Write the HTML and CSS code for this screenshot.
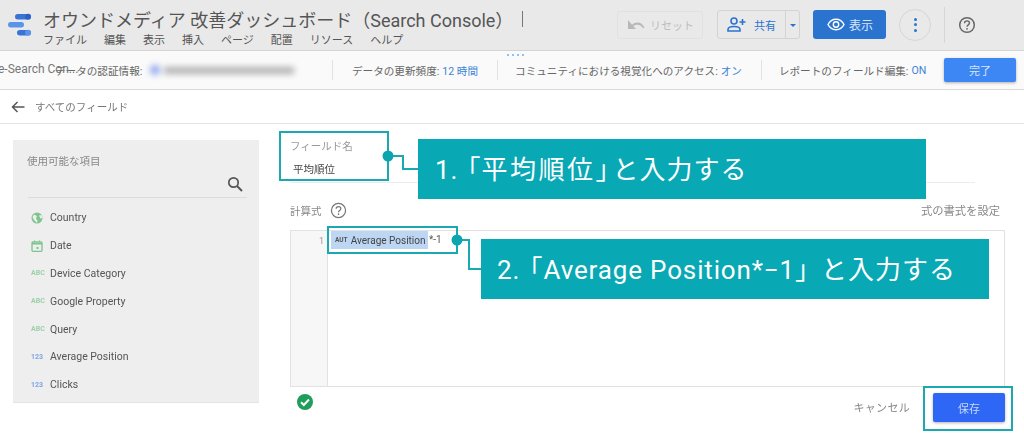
FILE: index.html
```html
<!DOCTYPE html>
<html lang="ja">
<head>
    <meta charset="UTF-8">
    <meta name="viewport" content="width=device-width, initial-scale=1.0">
    <title>オウンドメディア 改善ダッシュボード</title>
    <link rel="stylesheet" href="styles.css">
</head>
<body>
    <div class="page">
        <!-- ヘッダー -->
        <header class="topbar">
            <svg class="logo" width="24" height="24" viewBox="0 0 24 24">
                <rect x="7" y="1" width="16" height="5.500" rx="2.750" fill="#3a72d8"/>
                <rect x="0" y="9" width="16" height="5.500" rx="2.750" fill="#5a93ea"/>
                <rect x="9" y="17" width="14" height="5.500" rx="2.750" fill="#3a72d8"/>
                <circle cx="20" cy="3.700" r="2.900" fill="#2d5fc4"/>
                <circle cx="20" cy="19.700" r="2.900" fill="#5a93ea"/>
            </svg>
            <div class="doc">
                <div class="doc-title">オウンドメディア 改善ダッシュボード（Search Console）</div>
                <nav class="menu">
                    <span>ファイル</span><span>編集</span><span>表示</span><span>挿入</span><span>ページ</span><span>配置</span><span>リソース</span><span>ヘルプ</span>
                </nav>
            </div>
            <div class="caret"></div>
            <div class="actions">
                <button class="btn-reset">
                    <svg width="18" height="12" viewBox="0 0 18 12"><path d="M1 1v9h8L6.300 7.200C7.500 6.300 9 5.800 10.500 5.800c2.300 0 4.300 1.400 5.300 3.500l1.700-.8C16.100 5.400 13.500 3.500 10.500 3.500 8.400 3.500 6.500 4.300 5 5.700L1 1z" fill="#b9b9b9"/></svg>
                    リセット
                </button>
                <div class="btn-share">
                    <span class="share-main">
                        <svg width="19" height="15" viewBox="0 0 19 15"><circle cx="7" cy="4" r="3" fill="none" stroke="#2a74d0" stroke-width="1.600"/><path d="M1 14v-1.500C1 10.500 4 9.500 7 9.500s6 1 6 3V14z" fill="none" stroke="#2a74d0" stroke-width="1.600"/><path d="M15.500 2v6M12.500 5h6" stroke="#2a74d0" stroke-width="1.600"/></svg>
                        共有
                    </span>
                    <span class="share-arrow"></span>
                </div>
                <button class="btn-view">
                    <svg width="18" height="13" viewBox="0 0 18 13"><path d="M1 6.500C2.600 3.300 5.500 1.300 9 1.300s6.400 2 8 5.200c-1.600 3.200-4.500 5.200-8 5.200s-6.400-2-8-5.200z" fill="none" stroke="#fff" stroke-width="1.400"/><circle cx="9" cy="6.500" r="2.700" fill="none" stroke="#fff" stroke-width="1.400"/></svg>
                    表示
                </button>
                <div class="btn-more"><i></i><i></i><i></i></div>
                <div class="bar-sep"></div>
                <svg class="help" width="18" height="18" viewBox="0 0 18 18"><circle cx="9" cy="9" r="7.300" fill="none" stroke="#666" stroke-width="1.500"/><path d="M6.500 7.200C6.500 5.800 7.600 4.900 9 4.900s2.500.9 2.500 2.200c0 1.800-2.500 1.800-2.500 3.700" fill="none" stroke="#666" stroke-width="1.400"/><circle cx="9" cy="12.800" r=".9" fill="#666"/></svg>
            </div>
        </header>

        <!-- データソース情報 -->
        <div class="infobar">
            <span class="cut-name">e-Search Con...</span>
            <span class="info-cred">データの認証情報:</span>
            <span class="blurred"><i></i><b></b></span>
            <span class="info-item first">データの更新頻度: <em>12 時間</em></span>
            <span class="info-item">コミュニティにおける視覚化へのアクセス: <em>オン</em></span>
            <span class="info-item last">レポートのフィールド編集: <em>ON</em></span>
            <button class="btn-done">完了</button>
            <div class="grip"><i></i><i></i><i></i><i></i></div>
        </div>

        <div class="backrow">
            <svg width="14" height="12" viewBox="0 0 14 12"><path d="M13.500 6H2M6.500 1L1.500 6l5 5" fill="none" stroke="#555" stroke-width="1.500"/></svg>
            <span>すべてのフィールド</span>
        </div>

        <main class="content">
            <!-- 使用可能な項目 -->
            <aside class="fields">
                <div class="fields-label">使用可能な項目</div>
                <div class="fields-search">
                    <svg width="16" height="16" viewBox="0 0 16 16"><circle cx="6.500" cy="6.500" r="4.700" fill="none" stroke="#555" stroke-width="1.700"/><path d="M10 10l5 5" stroke="#555" stroke-width="2"/></svg>
                </div>
                <ul class="field-list">
                    <li><svg class="ficon" width="12" height="12" viewBox="0 0 12 12"><circle cx="6" cy="6" r="5.500" fill="#7fc48d"/><path d="M3 2.500l3 1.500-1 2.500 1.500 2-.5 2.500L3 8 1.500 5zM8 3.500l2.500-.5.800 3-2 .5z" fill="#eee"/></svg>Country</li>
                    <li><svg class="ficon" width="12" height="12" viewBox="0 0 12 12"><rect x="1" y="2" width="10" height="9.300" rx="1" fill="none" stroke="#7fc48d" stroke-width="1.300"/><path d="M1 3h10v1.500H1zM3 .5h1V2H3zM8 .5h1V2H8z" fill="#7fc48d"/><rect x="5.500" y="7" width="2" height="2" fill="#7fc48d"/></svg>Date</li>
                    <li><span class="ftype abc">ABC</span>Device Category</li>
                    <li><span class="ftype abc">ABC</span>Google Property</li>
                    <li><span class="ftype abc">ABC</span>Query</li>
                    <li><span class="ftype num">123</span>Average Position</li>
                    <li><span class="ftype num">123</span>Clicks</li>
                </ul>
            </aside>

            <!-- フィールド編集 -->
            <section class="editor">
                <div class="name-block">
                    <div class="name-label">フィールド名</div>
                    <div class="name-value">平均順位</div>
                </div>
                <div class="formula-head">
                    <span class="formula-label">計算式</span>
                    <svg width="17" height="17" viewBox="0 0 18 18"><circle cx="9" cy="9" r="7.500" fill="none" stroke="#777" stroke-width="1.300"/><path d="M6.500 7.200C6.500 5.800 7.600 4.900 9 4.900s2.500.9 2.500 2.200c0 1.800-2.500 1.800-2.500 3.700" fill="none" stroke="#777" stroke-width="1.300"/><circle cx="9" cy="12.800" r=".9" fill="#777"/></svg>
                    <span class="format-link">式の書式を設定</span>
                </div>
                <div class="code">
                    <div class="gutter">1</div>
                    <div class="code-line"><span class="chip"><small>AUT</small>Average Position</span><span class="op">*-1</span></div>
                </div>
                <div class="editor-foot">
                    <svg class="ok" width="18" height="18" viewBox="0 0 18 18"><circle cx="9" cy="9" r="8" fill="#1e9e5a"/><path d="M5 9.300l2.800 2.700L13 6.500" fill="none" stroke="#fff" stroke-width="2"/></svg>
                    <span class="cancel">キャンセル</span>
                    <button class="btn-save">保存</button>
                </div>
            </section>
        </main>

        <!-- 注釈 -->
        <div class="note-box box-name"></div>
        <div class="note-box box-code"></div>
        <div class="note-box box-save"></div>
        <svg class="note-lines" width="1024" height="434" viewBox="0 0 1024 434">
            <path d="M388 156H403V169H418M457 240H469V269H481" fill="none" stroke="#1aa9b0" stroke-width="2"/>
            <circle cx="388" cy="156" r="5.500" fill="#0ba5ad"/>
            <circle cx="457" cy="240" r="5.500" fill="#0ba5ad"/>
        </svg>
        <div class="note note-1">1.<span class="open">「</span><span class="spread">平均順位</span><span class="close">」</span>と入力する</div>
        <div class="note note-2">2.<span class="open">「</span><span class="latin">Average Position*−1</span><span class="close wide">」</span>と入力する</div>
    </div>
</body>
</html>
```

FILE: styles.css
```css
* { box-sizing: border-box; }
body {
    margin: 0;
    background: #fff;
    color: #444;
    font-family: Roboto, "Noto Sans CJK JP", sans-serif;
}
button { font-family: inherit; cursor: pointer; }
em { font-style: normal; }

.page {
    position: relative;
    width: 1024px;
    height: 434px;
    overflow: hidden;
    filter: blur(0.5px);
}

/* ヘッダー */
.topbar {
    display: flex;
    height: 51px;
    padding-left: 8px;
    background: #e9e9e9;
    border-bottom: 1px solid #d4d4d4;
}
.logo { margin-top: 13px; }
.doc { margin-left: 11px; padding-top: 8px; white-space: nowrap; }
.doc-title { font-size: 18px; line-height: 25px; color: #555; }
.menu { display: flex; gap: 17px; font-size: 11px; line-height: 16px; color: #555; }
.caret { width: 1px; height: 16px; margin: 11px 0 0 9px; background: #777; }
.actions { display: flex; align-items: center; margin-left: auto; padding-bottom: 1px; }
.btn-reset {
    display: flex;
    align-items: center;
    gap: 5px;
    width: 86px;
    height: 28px;
    padding: 0 0 0 9px;
    background: #e9e9e9;
    border: 1px solid #e1e1e1;
    border-radius: 3px;
    font-size: 11px;
    color: #bdbdbd;
}
.btn-share {
    display: flex;
    width: 83px;
    height: 29px;
    margin-left: 14px;
    border: 1px solid #d3d3d3;
    border-radius: 3px;
    font-size: 11px;
    color: #2a74d0;
}
.share-main { display: flex; align-items: center; gap: 8px; width: 68px; padding-left: 9px; border-right: 1px solid #d3d3d3; }
.share-arrow { width: 0; height: 0; margin: 13px 0 0 4px; border: 3px solid transparent; border-top: 3px solid #2a74d0; }
.btn-view {
    display: flex;
    align-items: center;
    gap: 4px;
    width: 73px;
    height: 29px;
    margin-left: 13px;
    padding: 0 0 0 14px;
    background: #2a74d0;
    border: none;
    border-radius: 3px;
    font-size: 12px;
    color: #d8e6f8;
}
.btn-more {
    display: flex;
    flex-direction: column;
    align-items: center;
    justify-content: center;
    gap: 2.500px;
    width: 32px;
    height: 32px;
    margin-left: 13px;
    border: 1px solid #d6d6d6;
    border-radius: 50%;
}
.btn-more i { width: 3px; height: 3px; border-radius: 50%; background: #2a74d0; }
.bar-sep { width: 1px; height: 36px; margin-left: 13px; background: #d6d6d6; }
.help { margin: 0 48px 0 13px; }

/* データソース情報 */
.infobar {
    position: relative;
    display: flex;
    align-items: center;
    height: 39px;
    padding-left: 55px;
    background: #fafafa;
    border-bottom: 1px solid #d9d9d9;
    font-size: 10.600px;
    color: #666;
    white-space: nowrap;
}
.infobar em { color: #3b82d6; }
.cut-name { position: absolute; left: -2px; top: 11px; font-size: 12px; color: #777; }
.info-cred { width: 95px; }
.blurred { display: flex; align-items: center; width: 182px; filter: blur(3px); }
.blurred i { width: 10px; height: 10px; border-radius: 50%; background: #8ea8ee; }
.blurred b { width: 130px; height: 7px; margin-left: 4px; background: #b0b0b0; }
.info-item { display: flex; align-items: center; gap: 3px; height: 20px; }
.info-item::before { content: ""; width: 1px; height: 20px; margin-right: 14px; background: #e2e2e2; }
.info-item.first { margin-right: 19px; }
.info-item.first::before { margin-right: 16px; }
.info-item.last::before { margin-right: 14px; }
.info-item + .info-item { margin-right: 19px; }
.btn-done {
    position: absolute;
    left: 944px;
    top: 7px;
    width: 72px;
    height: 24px;
    background: #3d87f5;
    border: none;
    border-radius: 2px;
    box-shadow: 0 1px 3px rgba(0,0,0,0.3);
    font-size: 11px;
    color: #d7e6fd;
}
.grip { position: absolute; left: 507px; top: 3px; display: flex; gap: 3px; }
.grip i { width: 2px; height: 2px; background: #6fb0e8; border-radius: 50%; }

.backrow {
    display: flex;
    align-items: center;
    gap: 10px;
    height: 34px;
    padding-left: 11px;
    border-bottom: 1px solid #e4e4e4;
    font-size: 10.500px;
    color: #777;
}

/* コンテンツ */
.content { display: flex; padding: 16px 19px 0 13px; }
.fields {
    width: 246px;
    height: 263px;
    padding: 15px 12px 0 14px;
    background: #eeeeee;
    border-bottom: 1px solid #e4e4e4;
    overflow: hidden;
}
.fields-label { font-size: 10.500px; line-height: 14px; color: #888; }
.fields-search {
    display: flex;
    justify-content: flex-end;
    align-items: center;
    height: 28px;
    margin: 1px 0 0 1px;
    padding-right: 4px;
    border-bottom: 1px solid #dcdcdc;
}
.field-list { height: 184px; margin: 6px 0 0; padding: 0 0 0 4px; list-style: none; overflow: hidden; }
.field-list li { display: flex; align-items: center; height: 27.800px; font-size: 10.500px; color: #555; }
.ficon { flex: none; margin-right: 7px; }
.ftype { flex: none; width: 12px; margin-right: 7px; font-size: 7px; font-weight: 700; white-space: nowrap; }
.ftype.abc { color: #9ed0a8; }
.ftype.num { color: #7ea4e6; }

.editor { flex: 1; margin-left: 31px; }
.name-block { width: 685px; height: 43px; margin-top: -1px; border-bottom: 1px solid #ececec; box-sizing: content-box; }
.name-label { font-size: 10.500px; line-height: 16px; color: #999; }
.name-value { margin: 7px 0 0 3px; font-size: 10.500px; line-height: 16px; color: #444; }
.formula-head { display: flex; align-items: center; gap: 8px; height: 18px; margin-top: 18px; }
.formula-label { font-size: 10.500px; color: #888; }
.format-link { margin-left: auto; margin-right: 5px; font-size: 11.300px; color: #888; }
.code { display: flex; height: 157px; margin-top: 11px; border: 1px solid #e2e2e2; }
.gutter { width: 37px; padding: 5px 3px 0 0; background: #f7f7f7; border-right: 1px solid #e2e2e2; text-align: right; font-size: 9px; color: #999; }
.code-line { display: flex; align-items: flex-start; padding-left: 3px; font-size: 10px; color: #555; }
.chip { display: flex; align-items: center; gap: 3px; width: 97px; height: 18px; padding-left: 4px; background: #bcd6f4; color: #444; white-space: nowrap; }
.chip small { font-size: 6.500px; font-weight: 700; color: #555; }
.op { margin: 3px 0 0 1px; }
.editor-foot { display: flex; align-items: center; height: 35px; }
.ok { margin: 0 0 6px 6px; }
.cancel { margin: 5px 23px 0 auto; font-size: 11px; color: #888; letter-spacing: .3px; }
.btn-save {
    width: 72px;
    height: 29px;
    margin: 6px 0 0;
    background: #2e66f6;
    border: none;
    border-radius: 2px;
    box-shadow: 0 1px 3px rgba(0,0,0,0.3);
    font-size: 11px;
    color: #c9d9fd;
}

/* 注釈 */
.note-box { position: absolute; border: 2px solid #1aa9b0; }
.box-name { left: 279px; top: 131px; width: 110px; height: 50px; }
.box-code { left: 327px; top: 226px; width: 131px; height: 28px; }
.box-save { left: 923px; top: 386px; width: 90px; height: 45px; }
.note-lines { position: absolute; left: 0; top: 0; }
.note {
    position: absolute;
    width: 508px;
    height: 60px;
    background: #08a8b4;
    color: #fff;
    font-size: 26px;
    letter-spacing: 1px;
    line-height: 63px;
    white-space: nowrap;
}
.open { margin-left: 9px; font-feature-settings: "halt"; }
.spread { letter-spacing: 2.500px; }
.latin { letter-spacing: .85px; }
.close { font-feature-settings: "halt"; letter-spacing: 4px; }
.close.wide { letter-spacing: 13px; }
.note-1 { left: 418px; top: 139px; padding-left: 17px; }
.note-2 { left: 481px; top: 239px; padding-left: 16px; }
```
